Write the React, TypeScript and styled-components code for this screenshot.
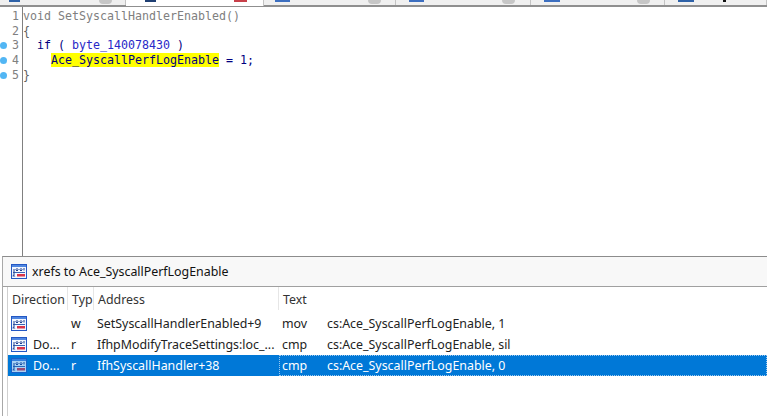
import React from 'react'
import styled, { createGlobalStyle } from 'styled-components'

const GlobalStyle = createGlobalStyle`
  html, body {
    margin: 0;
    padding: 0;
    background: #fff;
  }
`

const tabs = [
  { width: 126, icon: '#2f62a8', iconLeft: 9, iconWidth: 11, end: 'close', endRight: 13 },
  { width: 138, active: true, icon: '#1f3f73', iconLeft: 19, iconWidth: 11, end: 'red', endRight: 16 },
  { width: 132, icon: '#3d6fc0', iconLeft: 11, iconWidth: 15, end: 'close', endRight: 14 },
  { width: 135, icon: '#3d6fc0', iconLeft: 13, iconWidth: 15, end: 'close', endRight: 15 },
  { width: 134, icon: '#3d6fc0', iconLeft: 13, iconWidth: 16, end: 'close', endRight: 14 },
  { width: 102, icon: '#2f62a8', iconLeft: 13, iconWidth: 16, end: 'black', endRight: 40 },
]

const rows = [
  { direction: '', type: 'w', address: 'SetSyscallHandlerEnabled+9', mnem: 'mov', operand: 'cs:Ace_SyscallPerfLogEnable, 1' },
  { direction: 'Do...', type: 'r', address: 'IfhpModifyTraceSettings:loc_...', mnem: 'cmp', operand: 'cs:Ace_SyscallPerfLogEnable, sil' },
  { direction: 'Do...', type: 'r', address: 'IfhSyscallHandler+38', mnem: 'cmp', operand: 'cs:Ace_SyscallPerfLogEnable, 0', selected: true },
]

const XrefIcon = ({ faded }: { faded?: boolean }) => (
  <svg width="16" height="15" viewBox="0 0 16 15" style={{ opacity: faded ? 0.7 : 1, flexShrink: 0 }}>
    <rect x="0.5" y="0.5" width="15" height="14" fill="#f2f7ff" stroke="#2458c4" />
    <rect x="1" y="1" width="14" height="2" fill="#4f86e0" />
    {/* two arrows pointing down into the line */}
    <path d="M6 4v2.5M10 4v2.5M13 4v2.5" stroke="#1f3f90" fill="none" />
    <path d="M4.5 5.5L6 7l1.5-1.5M8.5 5.5L10 7l1.5-1.5" stroke="#1f3f90" fill="none" />
    <path d="M2 8.5h12" stroke="#3a64b4" fill="none" />
    <path d="M3 5v6.5" stroke="#1f3f90" fill="none" />
    <path d="M2 10.5l2.5 2h-3z" fill="#2a4fa0" />
    <rect x="6" y="10" width="8" height="2.5" fill="#d8344a" />
  </svg>
)

export default function App() {
  return (
    <Page>
      <GlobalStyle />
      <TabStrip>
        {tabs.map((tab, i) => (
          <Tab key={i} $width={tab.width} $active={tab.active}>
            <TabIcon $color={tab.icon} $left={tab.iconLeft} $width={tab.iconWidth} />
            <TabEnd $kind={tab.end} $right={tab.endRight} />
          </Tab>
        ))}
      </TabStrip>

      <Editor>
        <Gutter>
          {[1, 2, 3, 4, 5].map((n) => (
            <GutterLine key={n}>
              {n >= 3 && <Dot />}
              <LineNo>{n}</LineNo>
            </GutterLine>
          ))}
        </Gutter>
        <Code>
          <CodeLine $color="#808080">void SetSyscallHandlerEnabled()</CodeLine>
          <CodeLine $color="#606060">{'{'}</CodeLine>
          <CodeLine $color="#000080">
            {'  if ( '}<Global>byte_140078430</Global>{' )'}
          </CodeLine>
          <CodeLine $color="#000080">
            {'    '}<Highlight>Ace_SyscallPerfLogEnable</Highlight>{' = 1;'}
          </CodeLine>
          <CodeLine $color="#606060">{'}'}</CodeLine>
        </Code>
      </Editor>

      <Popup>
        <TitleBar>
          <XrefIcon />
          <Title>xrefs to Ace_SyscallPerfLogEnable</Title>
        </TitleBar>
        <Table>
          <HeaderRow>
            <HeadCell $width={60}>Direction</HeadCell>
            <HeadCell $width={26}>Typ</HeadCell>
            <HeadCell $width={185}>Address</HeadCell>
            <HeadCell $last>Text</HeadCell>
          </HeaderRow>
          {rows.map((row) => (
            <Row key={row.address} $selected={row.selected}>
              <DirectionCell>
                <XrefIcon faded={row.selected} />
                <DirectionText>{row.direction}</DirectionText>
              </DirectionCell>
              <TypeCell>{row.type}</TypeCell>
              <AddressCell>{row.address}</AddressCell>
              <TextCell $selected={row.selected}>
                <Mnem>{row.mnem}</Mnem>
                <span>{row.operand}</span>
              </TextCell>
            </Row>
          ))}
        </Table>
      </Popup>
    </Page>
  )
}

const Page = styled.div`
  width: 767px;
  height: 416px;
  display: flex;
  flex-direction: column;
  overflow: hidden;
  background: #fff;
`

const TabStrip = styled.div`
  height: 5px;
  display: flex;
  flex-shrink: 0;
  background: #f0f0f0;
  border-bottom: 2px solid #8f8f8f;
`

const Tab = styled.div<{ $width: number; $active?: boolean }>`
  width: ${(p) => p.$width}px;
  box-sizing: border-box;
  display: flex;
  justify-content: space-between;
  align-items: flex-start;
  background: ${(p) => (p.$active ? '#fff' : '#f0f0f0')};
  border-right: 1px solid #c4c4c4;
  height: ${(p) => (p.$active ? '6px' : '5px')};
  position: relative;
`

const TabIcon = styled.div<{ $color: string; $left: number; $width: number }>`
  margin-left: ${(p) => p.$left}px;
  width: ${(p) => p.$width}px;
  height: 2px;
  background: ${(p) => p.$color};
`

const TabEnd = styled.div<{ $kind: string; $right: number }>`
  margin-right: ${(p) => p.$right}px;
  width: ${(p) => (p.$kind === 'black' ? 3 : 13)}px;
  height: ${(p) => (p.$kind === 'close' ? 4 : 2)}px;
  background: ${(p) =>
    p.$kind === 'red' ? '#c8404a' : p.$kind === 'black' ? '#111' : '#c6c6c6'};
  border-radius: ${(p) => (p.$kind === 'close' ? '0 0 4px 4px' : '0')};
`

const Editor = styled.div`
  height: 249px;
  flex-shrink: 0;
  display: flex;
  font-family: 'DejaVu Sans Mono', monospace;
  font-size: 11.63px;
  line-height: 14.7px;
  background: #fff;
`

const Gutter = styled.div`
  width: 23px;
  box-sizing: border-box;
  border-right: 1px solid #808080;
  padding-top: 2px;
`

const GutterLine = styled.div`
  height: 14.7px;
  display: flex;
  align-items: center;
  justify-content: flex-end;
  position: relative;
`

const Dot = styled.span`
  position: absolute;
  left: 0;
  top: 4px;
  width: 7px;
  height: 7px;
  border-radius: 50%;
  background: #52b6f4;
`

const LineNo = styled.span`
  color: #808080;
  padding-right: 3px;
`

const Code = styled.div`
  padding: 2px 0 0 0;
`

const CodeLine = styled.div<{ $color: string }>`
  height: 14.7px;
  white-space: pre;
  color: ${(p) => p.$color};
`

const Global = styled.span`
  color: #2828c8;
`

const Highlight = styled.span`
  background: #ffff00;
  color: #000080;
`

const Popup = styled.div`
  flex: 1;
  margin-left: 2px;
  display: flex;
  flex-direction: column;
  border-top: 1px solid #8c8c8c;
  border-left: 1px solid #a8a8a8;
  background: #fff;
  font-family: 'Noto Sans', sans-serif;
  font-size: 12.4px;
  color: #222;
`

const TitleBar = styled.div`
  height: 30px;
  flex-shrink: 0;
  box-sizing: border-box;
  display: flex;
  align-items: center;
  gap: 5px;
  padding-left: 8px;
  background: #f8f8f8;
  border-bottom: 1px solid #a0a0a0;
`

const Title = styled.span`
  font-size: 12.4px;
  color: #111;
  white-space: nowrap;
`

const Table = styled.div`
  flex: 1;
  margin-left: 4px;
  border-left: 1px solid #d0d0d0;
`

const HeaderRow = styled.div`
  height: 26px;
  display: flex;
  align-items: stretch;
`

const HeadCell = styled.div<{ $width?: number; $last?: boolean }>`
  width: ${(p) => (p.$width ? `${p.$width}px` : 'auto')};
  flex: ${(p) => (p.$last ? 1 : 'none')};
  box-sizing: border-box;
  padding-left: 4px;
  margin-bottom: 3px;
  line-height: 25px;
  font-size: 12.4px;
  white-space: nowrap;
  overflow: hidden;
  color: #333;
  border-right: ${(p) => (p.$last ? 'none' : '1px solid #e6e6e6')};
`

const Row = styled.div<{ $selected?: boolean }>`
  height: 21px;
  display: flex;
  align-items: center;
  white-space: nowrap;
  background: ${(p) => (p.$selected ? '#0078d7' : 'transparent')};
  color: ${(p) => (p.$selected ? '#fff' : '#222')};
`

const DirectionCell = styled.div`
  width: 60px;
  display: flex;
  align-items: center;
  gap: 6px;
  padding-left: 3px;
  box-sizing: border-box;
`

const DirectionText = styled.span`
  font-size: 12.4px;
`

const TypeCell = styled.div`
  width: 26px;
  padding-left: 3px;
  box-sizing: border-box;
`

const AddressCell = styled.div`
  width: 185px;
  padding-left: 3px;
  box-sizing: border-box;
`

const TextCell = styled.div<{ $selected?: boolean }>`
  flex: 1;
  align-self: stretch;
  display: flex;
  align-items: center;
  padding-left: 3px;
  box-sizing: border-box;
  outline: ${(p) => (p.$selected ? '1px dotted #9cc8ee' : 'none')};
  outline-offset: -1px;
`

const Mnem = styled.span`
  width: 45px;
`
